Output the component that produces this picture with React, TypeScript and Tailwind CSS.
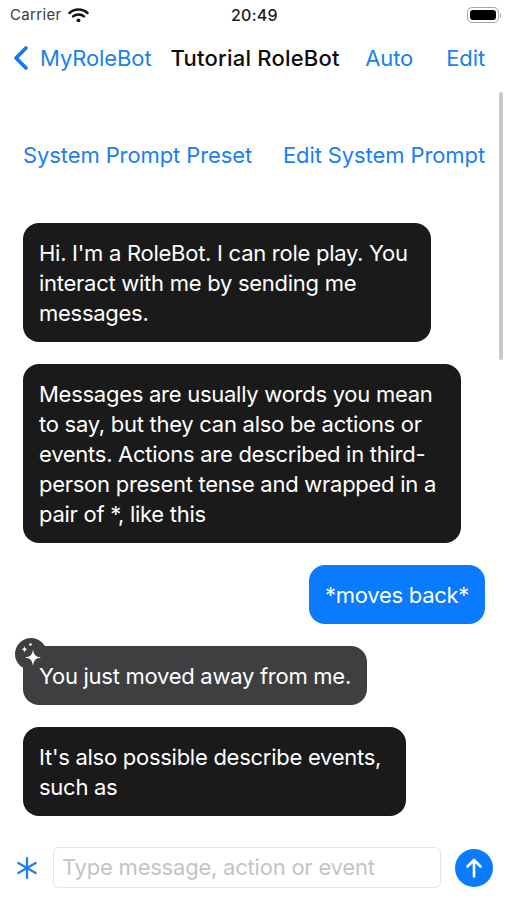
import { ChevronLeft } from 'lucide-react'

const font = "font-['Inter','Noto_Sans',sans-serif]"

function Bubble({ children, className = '' }: { children: React.ReactNode; className?: string }) {
  return (
    <div className={`rounded-[16px] px-4 py-[14.5px] text-[22px] leading-[30px] tracking-[-0.27px] text-white ${className}`}>
      {children}
    </div>
  )
}

function StatusBar() {
  return (
    <div className="flex h-[30px] items-center justify-between pl-[10px] pr-[6px] text-[#1c1c1e]">
      <div className="flex items-center gap-[6px]">
        <span className="text-[15px] tracking-[0.35px] text-[#3a3a3c]">Carrier</span>
        <svg width="21" height="15" viewBox="0 0 21 15" fill="none" stroke="#111" strokeLinecap="round">
          <path d="M1.5 5 C6.5 0.4 14.5 0.4 19.5 5" strokeWidth="2.4" />
          <path d="M5 8.4 C8 5.8 13 5.8 16 8.4" strokeWidth="2.4" />
          <circle cx="10.5" cy="12.3" r="1.9" fill="#111" stroke="none" />
        </svg>
      </div>
      <span className="absolute left-[231px] text-[16px] font-medium tracking-[0.25px]">20:49</span>
      <div className="flex items-center">
        <div className="flex h-[16px] w-[32px] items-center justify-center rounded-[5px] border-[1.5px] border-[#a8a8a8]">
          <div className="h-[10px] w-[26px] rounded-[3px] bg-black" />
        </div>
        <div className="ml-[1px] h-[5px] w-[1.5px] rounded-r bg-[#a8a8a8]" />
      </div>
    </div>
  )
}

function NavBar() {
  return (
    <div className="flex h-[56px] items-center pr-[22px] text-[22px] tracking-[-0.1px] text-[#1a7ff0]">
      <ChevronLeft size={40} strokeWidth={2.2} className="ml-[1px] shrink-0 text-[#0a7aff]" />
      <span className="-ml-[1px]">MyRoleBot</span>
      <span className="ml-[19px] font-medium tracking-[0.22px] text-[#0d0d0d]">Tutorial RoleBot</span>
      <span className="ml-auto">Auto</span>
      <span className="ml-[33px]">Edit</span>
    </div>
  )
}

export default function App() {
  return (
    <div className={`relative flex h-[900px] w-[507px] flex-col overflow-hidden bg-white ${font}`}>
      <StatusBar />
      <NavBar />
      <div className="absolute left-[499px] top-[92px] h-[268px] w-[4px] rounded-full bg-[#c9c9c9]" />

      <div className="mt-[54px] flex justify-between pl-[23px] pr-[22px] text-[22px] leading-[30px] tracking-[-0.1px] text-[#1a7ff0]">
        <span>System Prompt Preset</span>
        <span>Edit System Prompt</span>
      </div>

      <div className="mt-[53px] flex flex-col gap-[22px] pl-[23px] pr-[22px]">
        <Bubble className="w-[408px] bg-[#1a1a1b]">
          Hi. I'm a RoleBot. I can role play. You interact with me by sending me messages.
        </Bubble>
        <Bubble className="w-[438px] bg-[#1a1a1b]">
          Messages are usually words you mean to say, but they can also be actions or events. Actions are described in third-person present tense and wrapped in a pair of *, like this
        </Bubble>
        <Bubble className="w-[176px] self-end whitespace-nowrap bg-[#0a7aff]">*moves back*</Bubble>
        <div className="relative w-[344px]">
          <Bubble className="bg-[#3f3f41] whitespace-nowrap">You just moved away from me.</Bubble>
          <div className="absolute -left-[8px] -top-[8px] flex h-[32px] w-[32px] items-center justify-center rounded-full bg-[#3f3f41]">
            <svg width="32" height="32" viewBox="0 0 32 32" fill="white">
              <path d="M18 11.5 C18.9 17 20.5 18.6 26 19.5 C20.5 20.4 18.9 22 18 28 C17.1 22 15.5 20.4 10 19.5 C15.5 18.6 17.1 17 18 11.5 Z" />
              <path d="M9.5 8 C9.9 10.3 10.5 10.9 13 11.3 C10.5 11.7 9.9 12.3 9.5 14.8 C9.1 12.3 8.5 11.7 6 11.3 C8.5 10.9 9.1 10.3 9.5 8 Z" />
              <circle cx="15.5" cy="6.5" r="1.3" />
            </svg>
          </div>
        </div>
        <Bubble className="w-[383px] bg-[#1a1a1b]">It's also possible describe events, such as</Bubble>
      </div>

      <div className="mt-auto mb-[12px] flex items-center pl-[15px] pr-[14px]">
        <svg width="24" height="24" viewBox="0 0 24 24" fill="none" stroke="#1a7ff0" strokeWidth="2.2" strokeLinecap="round" className="shrink-0">
          <path d="M12 2 V22 M3.3 7 L20.7 17 M20.7 7 L3.3 17" />
        </svg>
        <div className="ml-[14px] flex h-[41px] flex-1 items-center rounded-[6px] border border-[#e6e6e6] px-[8px] text-[22px] tracking-[-0.22px] text-[#c4c4c6]">
          Type message, action or event
        </div>
        <div className="ml-[14px] flex h-[38px] w-[38px] shrink-0 items-center justify-center rounded-full bg-[#0a7aff]">
          <svg width="20" height="22" viewBox="0 0 20 22" fill="none" stroke="white" strokeWidth="2.6" strokeLinecap="round" strokeLinejoin="round">
            <path d="M10 19.5 V3 M3.5 9.5 L10 3 L16.5 9.5" />
          </svg>
        </div>
      </div>
    </div>
  )
}
